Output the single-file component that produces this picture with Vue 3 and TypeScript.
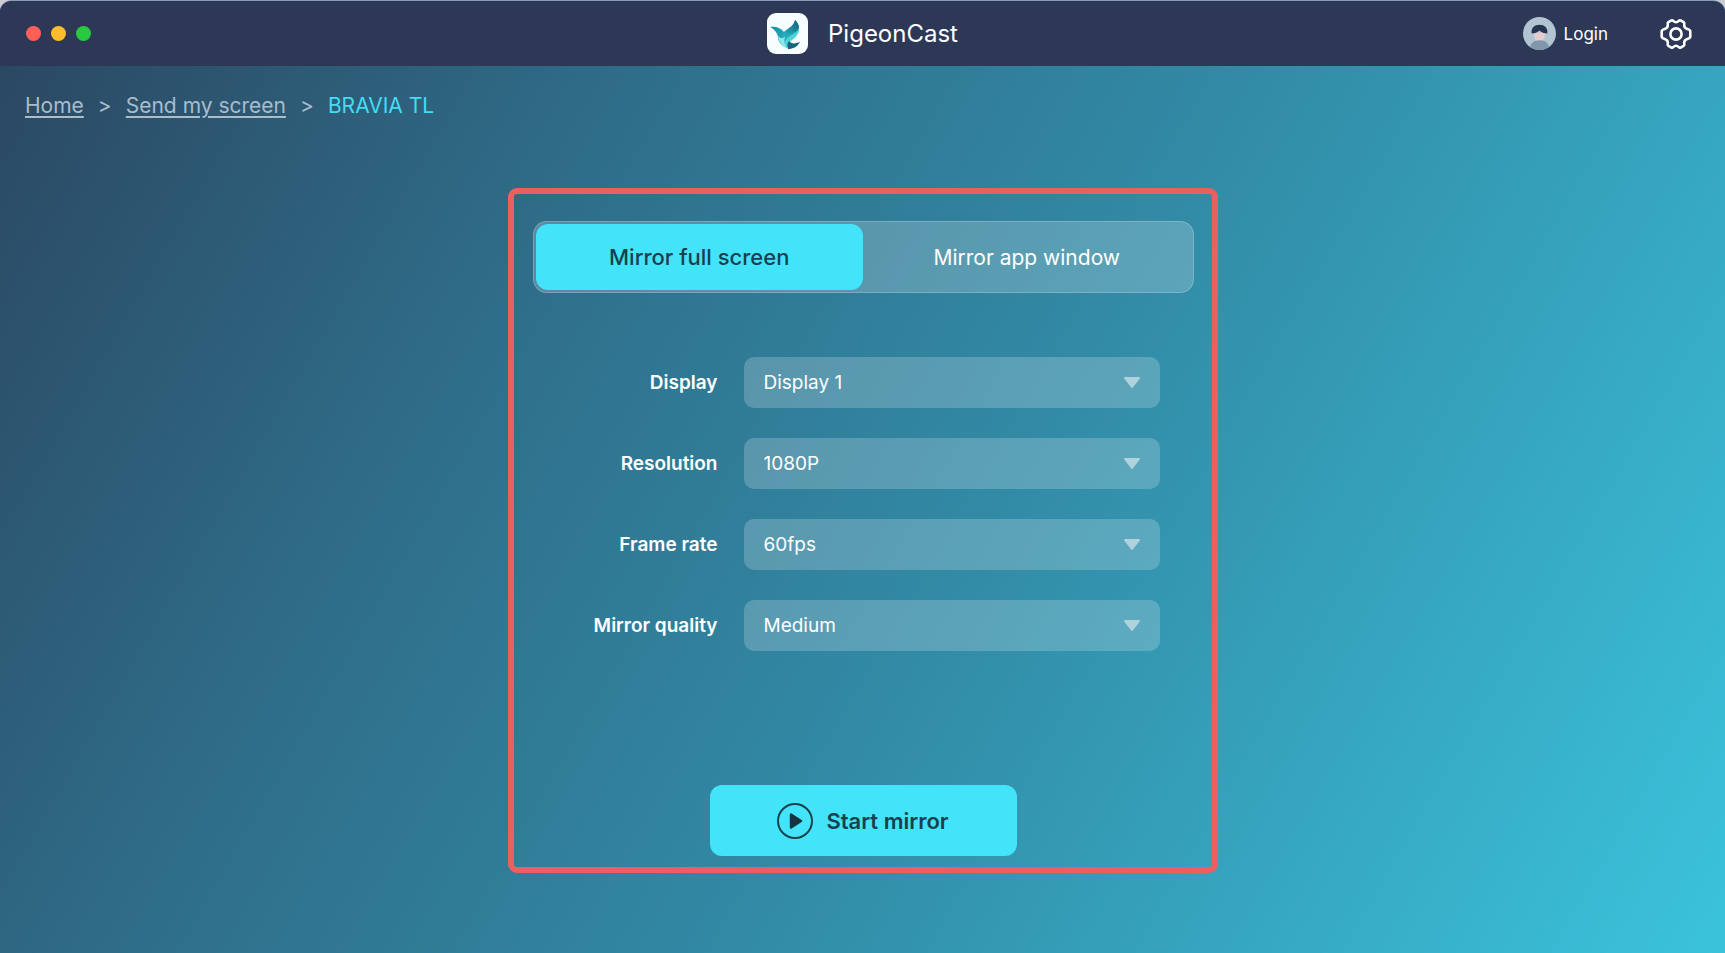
<script setup lang="ts">
import { reactive, ref } from 'vue'

type Mode = 'screen' | 'window'
type FieldId = 'display' | 'resolution' | 'rate' | 'quality'

interface Field {
  id: FieldId
  label: string
  options: string[]
}

const tabs: { id: Mode; label: string }[] = [
  { id: 'screen', label: 'Mirror full screen' },
  { id: 'window', label: 'Mirror app window' },
]

const fields: Field[] = [
  { id: 'display', label: 'Display', options: ['Display 1'] },
  { id: 'resolution', label: 'Resolution', options: ['1080P'] },
  { id: 'rate', label: 'Frame rate', options: ['60fps'] },
  { id: 'quality', label: 'Mirror quality', options: ['Medium'] },
]

const mode = ref<Mode>('screen')
const settings = reactive<Record<FieldId, string>>({
  display: 'Display 1',
  resolution: '1080P',
  rate: '60fps',
  quality: 'Medium',
})
</script>

<template>
  <div class="app">
    <header class="titlebar">
      <div class="lights">
        <button class="light close" type="button" aria-label="Close"></button>
        <button class="light minimise" type="button" aria-label="Minimise"></button>
        <button class="light expand" type="button" aria-label="Expand"></button>
      </div>

      <div class="brand">
        <svg class="logo" viewBox="0 0 41 41" aria-hidden="true">
          <defs>
            <linearGradient id="wing" x1="0" y1="0" x2="1" y2="0.6">
              <stop offset="0" stop-color="#14849b" />
              <stop offset="1" stop-color="#2fc3cd" />
            </linearGradient>
            <linearGradient id="feather" x1="1" y1="0" x2="0.2" y2="1">
              <stop offset="0" stop-color="#115f78" />
              <stop offset="1" stop-color="#27b4c4" />
            </linearGradient>
          </defs>
          <rect width="41" height="41" rx="9" fill="#f7feff" />
          <path d="M3 14C9 13 14 15 17 19C22 17 27 13 28 7C33 12 33 19 29 23C27 26 22 26 20 35C15 33 11 29 11 24C10 19 7 16 3 14Z" fill="url(#wing)" />
          <path d="M28 7C27 13 21 15 17 19C16 22 16 24 17 26C21 20 29 21 32 15C32 11 30 9 28 7Z" fill="url(#feather)" />
          <path d="M32 16C29 22 20 22 18 29C18 31 18 33 20 35C20 27 29 27 31 20C32 19 32 17 32 16Z" fill="#4fd2d8" />
          <path d="M11 23C12 29 15 33 20 35C17 31 17 27 18 24C15 26 13 25 11 23Z" fill="#8ce9ea" />
          <path d="M22 28C24 31 28 31 33 29C30 34 26 36 21 36C20 33 20 30 22 28Z" fill="#14647c" />
        </svg>
        <h1 class="name">PigeonCast</h1>
      </div>

      <div class="actions">
        <button class="login" type="button">
          <svg class="avatar" viewBox="0 0 34 34" aria-hidden="true">
            <defs>
              <clipPath id="face"><circle cx="17" cy="17" r="17" /></clipPath>
            </defs>
            <g clip-path="url(#face)">
              <rect width="34" height="34" fill="#b1c4d2" />
              <path d="M11 16H23C23 21 21 26 17 26S11 21 11 16Z" fill="#e6cbcf" />
              <path d="M7 34C7 27 11 24 17 24S27 27 27 34Z" fill="#8297ad" />
              <path d="M9 17C8 11 12 8 17 8S26 11 25 17C22 17 19 16 17 14C15 16 12 17 9 17Z" fill="#26354f" />
            </g>
          </svg>
          <span>Login</span>
        </button>
        <button class="settings" type="button" aria-label="Settings">
          <svg viewBox="0 0 32 32" aria-hidden="true">
            <path
              d="M8.400 4.200L11.400 2.400Q12.400 2 13.200 2.900Q16 5.600 18.800 2.900Q19.600 2 20.600 2.400L23.600 4.200Q24.500 4.800 24.300 6Q23.600 9.900 27.400 11Q30.300 11.800 30.300 13.400V18.600Q30.300 20.200 27.400 21Q23.600 22.100 24.300 26Q24.500 27.200 23.600 27.800L20.600 29.600Q19.600 30 18.800 29.100Q16 26.400 13.200 29.100Q12.400 30 11.400 29.600L8.400 27.800Q7.500 27.200 7.700 26Q8.400 22.100 4.600 21Q1.700 20.200 1.700 18.600V13.400Q1.700 11.800 4.600 11Q8.400 9.900 7.700 6Q7.500 4.800 8.400 4.200Z"
              fill="none"
              stroke="#fff"
              stroke-width="2.6"
              stroke-linejoin="round"
            />
            <circle cx="16" cy="16" r="5.600" fill="none" stroke="#fff" stroke-width="2.6" />
          </svg>
        </button>
      </div>
    </header>

    <nav class="crumbs" aria-label="Breadcrumb">
      <a href="#home">Home</a>
      <span>&gt;</span>
      <a href="#send">Send my screen</a>
      <span>&gt;</span>
      <span class="current" aria-current="page">BRAVIA TL</span>
    </nav>

    <main class="panel">
      <div class="tabs" role="tablist">
        <button
          v-for="tab in tabs"
          :key="tab.id"
          class="tab"
          :class="{ active: mode === tab.id }"
          type="button"
          role="tab"
          :aria-selected="mode === tab.id"
          @click="mode = tab.id"
        >
          {{ tab.label }}
        </button>
      </div>

      <form class="form" @submit.prevent>
        <div class="fields">
          <div v-for="field in fields" :key="field.id" class="field">
            <label :for="field.id">{{ field.label }}</label>
            <div class="picker">
              <select :id="field.id" v-model="settings[field.id]">
                <option v-for="option in field.options" :key="option">{{ option }}</option>
              </select>
              <svg class="arrow" viewBox="0 0 18 12" aria-hidden="true">
                <path d="M2 1H16L9 10Z" fill="#b0d2dd" stroke="#b0d2dd" stroke-width="2" stroke-linejoin="round" />
              </svg>
            </div>
          </div>
        </div>

        <button class="start" type="submit">
          <svg viewBox="0 0 36 36" aria-hidden="true">
            <circle cx="18" cy="18" r="17" fill="none" stroke="#17414d" stroke-width="2" />
            <path d="M14 11.500L24 18L14 24.500Z" fill="#17333f" stroke="#17333f" stroke-width="2.400" stroke-linejoin="round" />
          </svg>
          <span>Start mirror</span>
        </button>
      </form>
    </main>
  </div>
</template>

<style>
body {
  background: #c9cbd0;
}
</style>

<style scoped>
.app,
.app * {
  box-sizing: border-box;
}

.app {
  min-height: 100vh;
  display: flex;
  flex-direction: column;
  overflow: hidden;
  border-top: 1px solid #8c9bb8;
  border-radius: 12px 12px 0 0;
  background: linear-gradient(120deg, #2b4660 0%, #2f6f8b 31%, #328ca7 58%, #3bc3dc 100%);
  color: #fff;
  font-family: Inter, 'Liberation Sans', sans-serif;
}

button {
  padding: 0;
  border: 0;
  background: none;
  color: inherit;
  font: inherit;
  cursor: pointer;
}

svg {
  display: block;
}

.titlebar {
  height: 65px;
  padding: 0 26px;
  display: grid;
  grid-template-columns: 1fr auto 1fr;
  align-items: center;
  background: #2d3857;
}

.lights {
  display: flex;
  gap: 10px;
}

.light {
  width: 15px;
  height: 15px;
  border-radius: 50%;
}

.close {
  background: #fe5f57;
}

.minimise {
  background: #febc2e;
}

.expand {
  background: #28c840;
}

.brand {
  display: flex;
  align-items: center;
  gap: 20px;
}

.logo {
  width: 41px;
  height: 41px;
}

.name {
  margin: 0;
  font-size: 24px;
  font-weight: 400;
}

.actions {
  padding-right: 7px;
  display: flex;
  justify-content: flex-end;
  align-items: center;
  gap: 52px;
}

.login {
  display: flex;
  align-items: center;
  gap: 8px;
  font-size: 17px;
}

.avatar {
  width: 33px;
  height: 33px;
}

.settings svg {
  width: 32px;
  height: 32px;
}

.crumbs {
  padding: 25px 25px 23px;
  display: flex;
  flex-wrap: wrap;
  gap: 14px;
  color: #a9bdcc;
  font-size: 21px;
  line-height: 30px;
}

.crumbs a {
  color: inherit;
  text-decoration-thickness: 2px;
  text-underline-offset: 3px;
}

.crumbs .current {
  color: #43dcf4;
}

.panel {
  width: 100%;
  max-width: 710px;
  margin: 44px auto 24px;
  padding: 27px 18px 11px 19px;
  border: 6px solid #e9605e;
  border-radius: 9px;
}

.tabs {
  padding: 2px;
  display: grid;
  grid-template-columns: 1fr 1fr;
  border: 1px solid rgba(255, 255, 255, 0.2);
  border-radius: 14px;
  background: rgba(255, 255, 255, 0.2);
}

.tab {
  height: 66px;
  border-radius: 12px;
  font-size: 21px;
}

.tab.active {
  background: #43e4fa;
  color: #17414d;
  font-size: 22px;
  font-weight: 500;
}

.form {
  display: flex;
  flex-direction: column;
  align-items: center;
}

.fields {
  width: 100%;
  padding: 64px 34px 0;
  display: grid;
  gap: 30px;
}

.field {
  display: grid;
  grid-template-columns: 1fr 416px;
  align-items: center;
  gap: 26px;
}

.field label {
  text-align: right;
  font-size: 19px;
  font-weight: 600;
}

.picker {
  position: relative;
}

.picker select {
  width: 100%;
  height: 51px;
  padding: 0 56px 0 20px;
  display: block;
  appearance: none;
  border: 0;
  border-radius: 10px;
  background: rgba(255, 255, 255, 0.2);
  color: inherit;
  font-family: inherit;
  font-size: 19px;
}

.picker option {
  color: #17414d;
}

.arrow {
  position: absolute;
  top: 20px;
  right: 19px;
  width: 18px;
  height: 12px;
  pointer-events: none;
}

.start {
  width: 307px;
  height: 71px;
  margin-top: 134px;
  display: flex;
  justify-content: center;
  align-items: center;
  gap: 13px;
  border-radius: 12px;
  background: #43e4fa;
  color: #17414d;
  font-size: 22px;
  font-weight: 600;
}

.start svg {
  width: 36px;
  height: 36px;
}
</style>
